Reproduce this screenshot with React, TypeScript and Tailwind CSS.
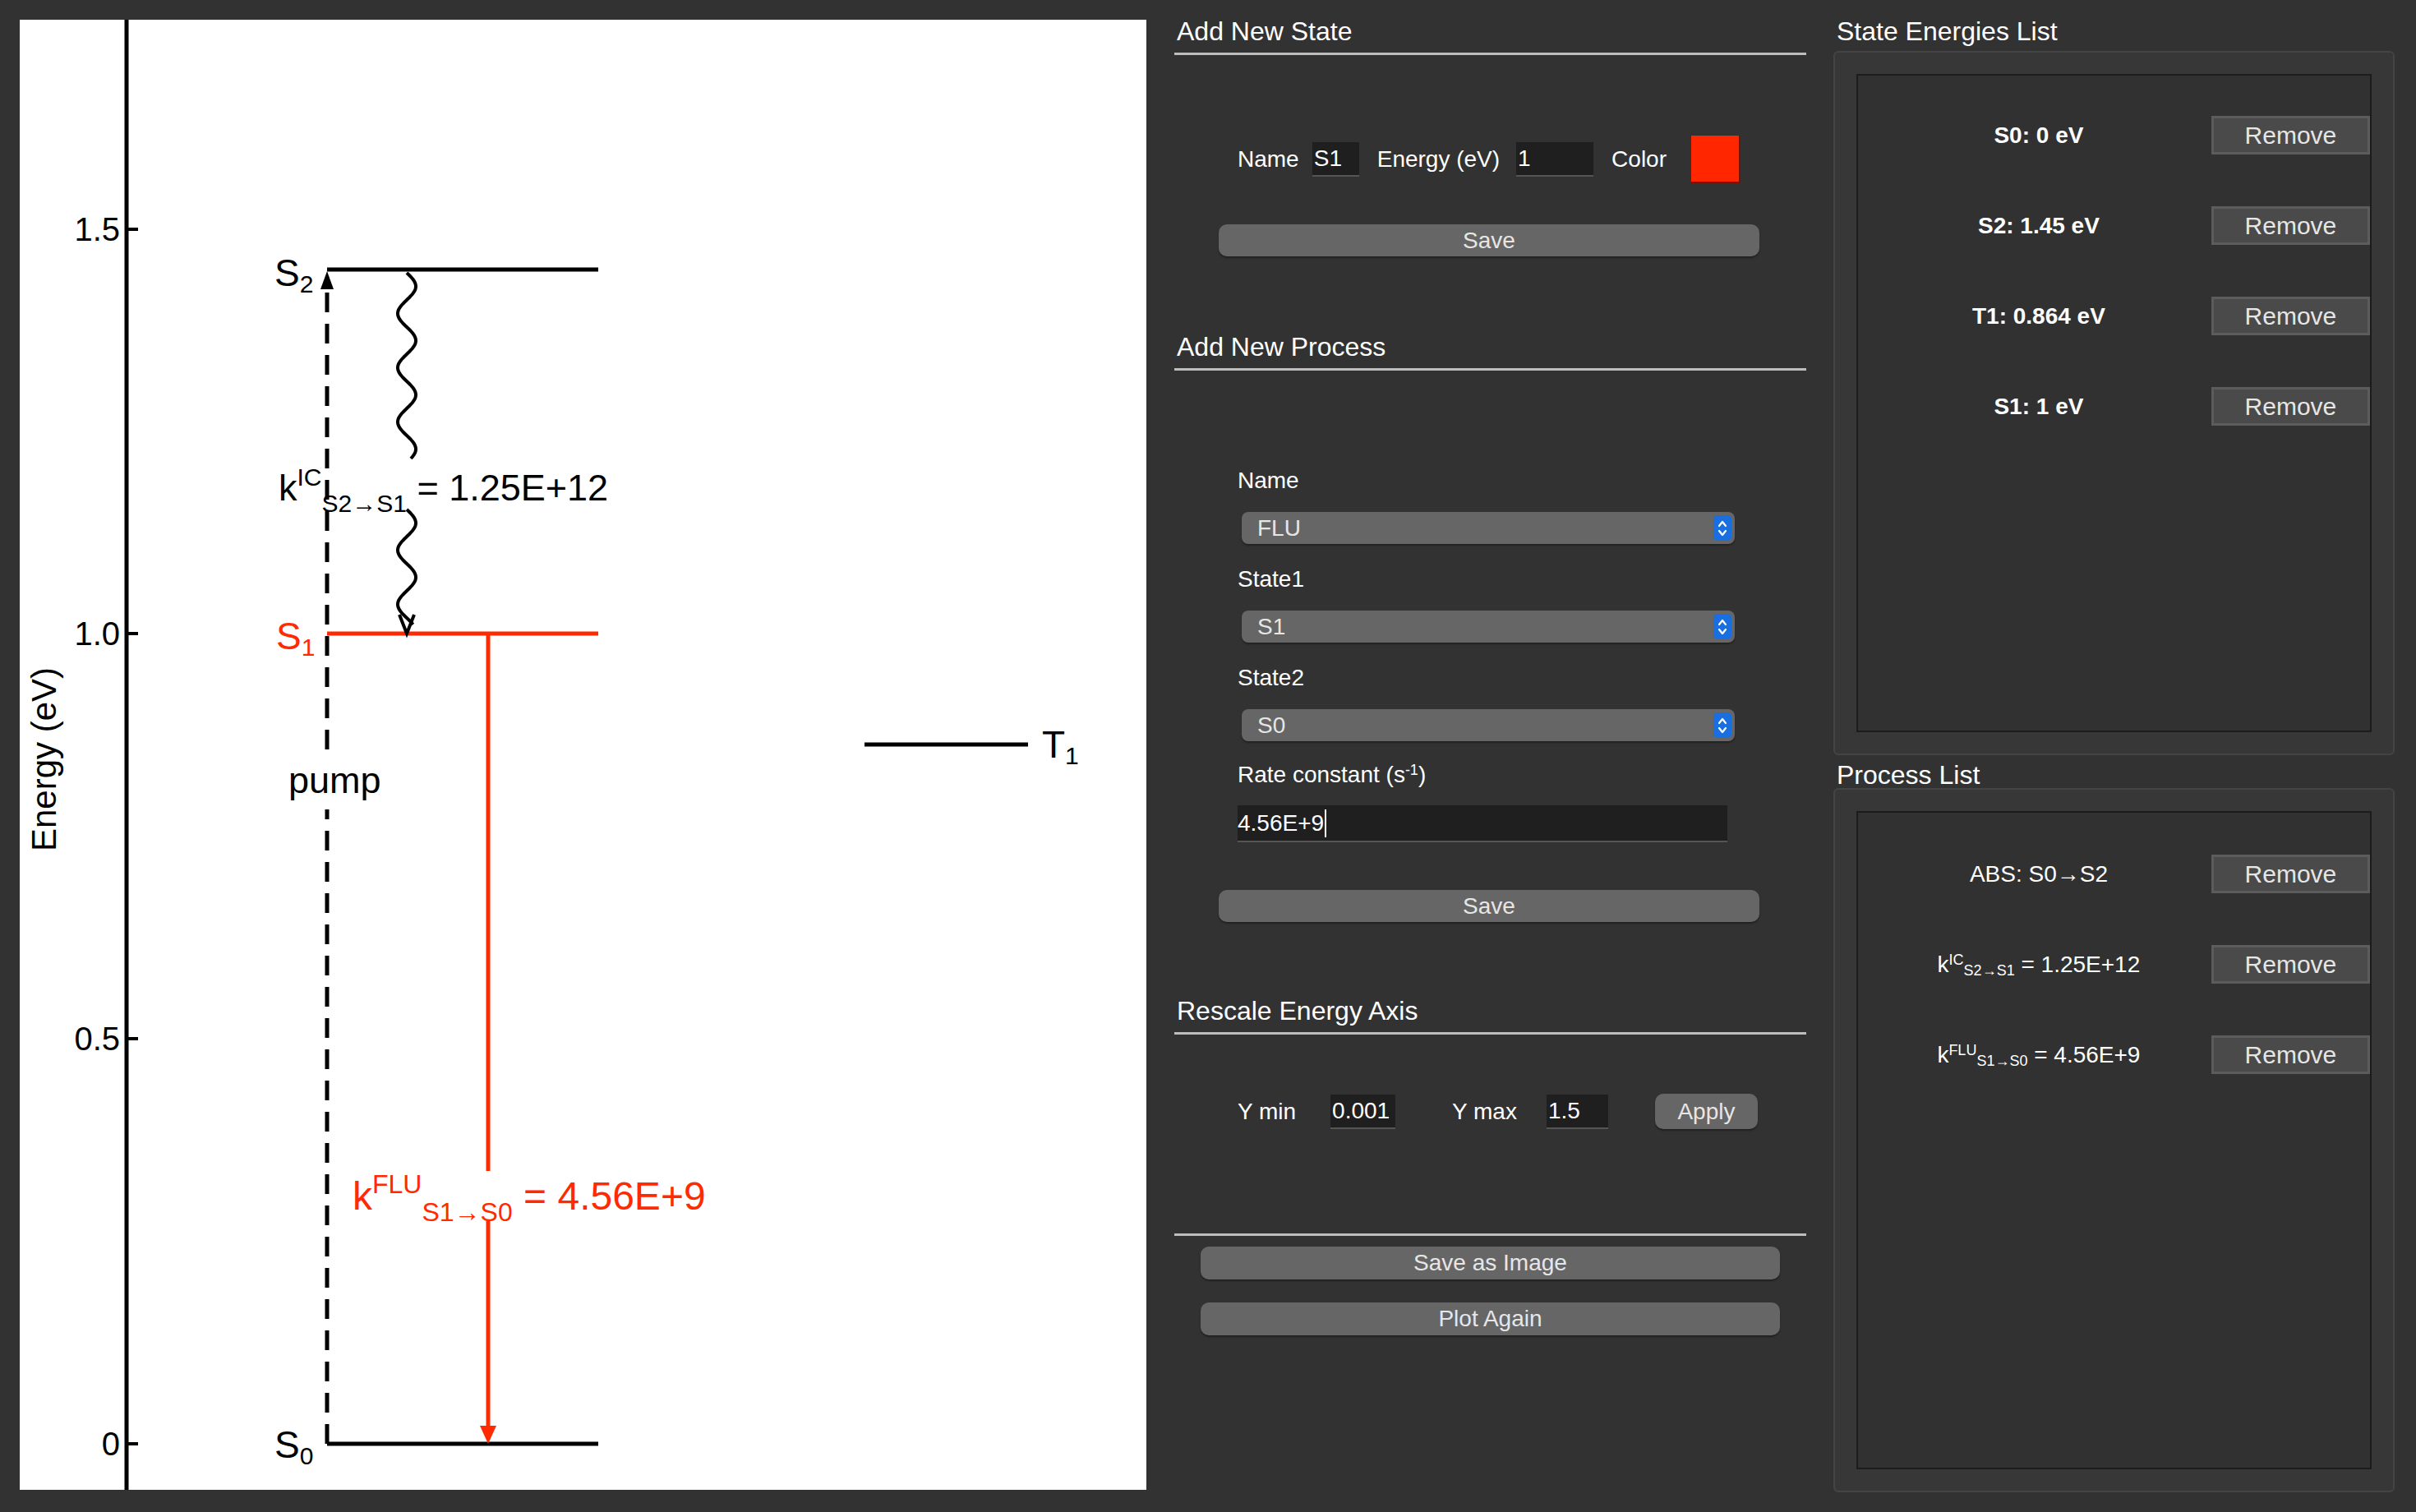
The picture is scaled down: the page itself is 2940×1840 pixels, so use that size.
import React from "react";

const RED = "#ff2a00";

function wave(x: number, y0: number, y1: number) {
  // vertical sine squiggle
  const pts: string[] = [];
  for (let y = y0; y <= y1; y += 2) {
    const dx = 11 * Math.sin(((y - y0) / 66) * 2 * Math.PI);
    pts.push(`${(x + dx).toFixed(1)},${y}`);
  }
  return "M" + pts.join(" L");
}

function Plot() {
  const tick = (y: number, label: string) => (
    <g key={label}>
      <line x1={154} x2={168} y1={y} y2={y} stroke="black" strokeWidth={4} />
      <text x={146} y={y + 14} textAnchor="end" fontSize={40}>{label}</text>
    </g>
  );
  return (
    <svg width={1371} height={1789} viewBox="24 24 1371 1789" className="bg-white block" fontFamily="'Liberation Sans', Arial, sans-serif">
      <line x1={154} x2={154} y1={24} y2={1813} stroke="black" strokeWidth={5} />
      {tick(279, "1.5")}
      {tick(771, "1.0")}
      {tick(1264, "0.5")}
      {tick(1757, "0")}
      <text transform="translate(68 924) rotate(-90)" textAnchor="middle" fontSize={42}>Energy (eV)</text>

      {/* levels */}
      <line x1={398} x2={728} y1={328} y2={328} stroke="black" strokeWidth={5} />
      <line x1={398} x2={728} y1={771} y2={771} stroke={RED} strokeWidth={5} />
      <line x1={398} x2={728} y1={1757} y2={1757} stroke="black" strokeWidth={5} />
      <line x1={1052} x2={1251} y1={906} y2={906} stroke="black" strokeWidth={5} />
      <text x={334} y={348} fontSize={46}>S<tspan fontSize={30} dy={8}>2</tspan></text>
      <text x={336} y={790} fontSize={46} fill={RED}>S<tspan fontSize={30} dy={8}>1</tspan></text>
      <text x={334} y={1774} fontSize={46}>S<tspan fontSize={30} dy={8}>0</tspan></text>
      <text x={1268} y={922} fontSize={46}>T<tspan fontSize={30} dy={8}>1</tspan></text>

      {/* pump dashed */}
      <line x1={398} x2={398} y1={1757} y2={985} stroke="black" strokeWidth={5} strokeDasharray="24 14" />
      <line x1={398} x2={398} y1={912} y2={340} stroke="black" strokeWidth={5} strokeDasharray="24 14" />
      <polygon points="398,330 390,352 406,352" fill="black" />
      <text x={351} y={965} fontSize={45}>pump</text>

      {/* IC wavy */}
      <path d={wave(495, 332, 559)} fill="none" stroke="black" strokeWidth={4} />
      <path d={wave(495, 620, 760)} fill="none" stroke="black" strokeWidth={4} />
      <polyline points="486,748 495,771 504,748" fill="none" stroke="black" strokeWidth={4} />
      <text x={339} y={609} fontSize={45}>
        k<tspan fontSize={30} dy={-18}>IC</tspan><tspan fontSize={30} dy={32}>S2→S1</tspan><tspan dy={-14}> = 1.25E+12</tspan>
      </text>

      {/* FLU arrow */}
      <line x1={594} x2={594} y1={771} y2={1425} stroke={RED} strokeWidth={5} />
      <line x1={594} x2={594} y1={1484} y2={1735} stroke={RED} strokeWidth={5} />
      <polygon points="594,1757 584,1735 604,1735" fill={RED} />
      <text x={429} y={1472} fontSize={48} fill={RED}>
        k<tspan fontSize={32} dy={-20}>FLU</tspan><tspan fontSize={32} dy={34}>S1→S0</tspan><tspan dy={-14}> = 4.56E+9</tspan>
      </text>
    </svg>
  );
}

function SectionTitle({ children }: { children: React.ReactNode }) {
  return (
    <div className="border-b-[3px] border-[#bdbdbd] pl-[3px] pb-[6px] text-[32px] leading-[40px] text-white">{children}</div>
  );
}

function GrayButton({ label, className }: { label: string; className: string }) {
  return (
    <div className={`flex items-center justify-center rounded-[10px] bg-[#666666] text-[28px] text-[#e6e6e6] shadow-[0_2px_2px_rgba(0,0,0,0.35)] ${className}`}>
      {label}
    </div>
  );
}

function Select({ value }: { value: string }) {
  return (
    <div className="ml-[5px] flex h-[39px] w-[600px] items-center justify-between rounded-[8px] bg-[#666666] pl-[19px] pr-[4px] text-[28px] text-[#e6e6e6] shadow-[0_2px_2px_rgba(0,0,0,0.35)]">
      <span>{value}</span>
      <div className="flex h-[31px] w-[22px] items-center justify-center rounded-[5px] bg-[#1a6fe0]">
        <svg width="12" height="22" viewBox="0 0 12 22" fill="none" stroke="white" strokeWidth="2.2" strokeLinecap="round" strokeLinejoin="round">
          <polyline points="2,8 6,3 10,8" />
          <polyline points="2,14 6,19 10,14" />
        </svg>
      </div>
    </div>
  );
}

function Field({ value, w }: { value: string; w: string }) {
  return (
    <div className={`flex h-[42px] items-center border-b-2 border-[#555] bg-[#1f1f1f] pl-[2px] text-[28px] text-white ${w}`}>{value}</div>
  );
}

function RemoveButton() {
  return (
    <div className="flex h-[47px] w-[195px] items-center justify-center border-[3px] border-[#5c5c5c] bg-[#4a4a4a] text-[30px] text-[#e6e6e6]">
      Remove
    </div>
  );
}

function ListRow({ children, bold }: { children: React.ReactNode; bold?: boolean }) {
  return (
    <div className="flex h-[47px] items-center">
      <div className={`w-[424px] text-center text-[28px] text-white ${bold ? "font-bold" : ""}`}>{children}</div>
      <RemoveButton />
    </div>
  );
}

export default function App() {
  return (
    <div className="flex h-[1840px] w-[2940px] bg-[#323232]" style={{ fontFamily: "'Liberation Sans', Arial, sans-serif" }}>
      <div className="pl-[24px] pt-[24px]">
        <Plot />
      </div>

      {/* middle controls */}
      <div className="ml-[34px] flex w-[769px] flex-col pt-[18px]">
        <SectionTitle>Add New State</SectionTitle>
        <div className="mt-[98px] flex items-center pl-[77px] text-[28px] text-white">
          <span>Name</span>
          <Field value="S1" w="ml-[16px] w-[57px]" />
          <span className="ml-[22px]">Energy (eV)</span>
          <Field value="1" w="ml-[20px] w-[94px]" />
          <span className="ml-[22px]">Color</span>
          <div className="ml-[30px] h-[58px] w-[60px] border-b-2 border-r-2 border-[#7a1000] bg-[#ff2600]" />
        </div>
        <GrayButton label="Save" className="ml-[54px] mt-[50px] h-[39px] w-[658px]" />

        <div className="mt-[90px]"><SectionTitle>Add New Process</SectionTitle></div>
        <div className="mt-[117px] pl-[77px] text-[28px] leading-[34px] text-white">Name</div>
        <div className="mt-[21px] pl-[77px]"><Select value="FLU" /></div>
        <div className="mt-[26px] pl-[77px] text-[28px] leading-[34px] text-white">State1</div>
        <div className="mt-[21px] pl-[77px]"><Select value="S1" /></div>
        <div className="mt-[26px] pl-[77px] text-[28px] leading-[34px] text-white">State2</div>
        <div className="mt-[21px] pl-[77px]"><Select value="S0" /></div>
        <div className="mt-[24px] pl-[77px] text-[28px] leading-[34px] text-white">
          Rate constant (s<sup className="text-[18px]">-1</sup>)
        </div>
        <div className="mt-[20px] pl-[77px]">
          <div className="flex h-[45px] w-[596px] items-center border-b-2 border-[#555] bg-[#1f1f1f] text-[28px] text-white">
            4.56E+9<span className="ml-[1px] h-[34px] w-[2px] bg-white" />
          </div>
        </div>
        <GrayButton label="Save" className="ml-[54px] mt-[58px] h-[39px] w-[658px]" />

        <div className="mt-[88px]"><SectionTitle>Rescale Energy Axis</SectionTitle></div>
        <div className="mt-[72px] flex items-center pl-[77px] text-[28px] text-white">
          <span>Y min</span>
          <Field value="0.001" w="ml-[42px] w-[79px]" />
          <span className="ml-[69px]">Y max</span>
          <Field value="1.5" w="ml-[36px] w-[75px]" />
          <GrayButton label="Apply" className="ml-[57px] h-[43px] w-[125px]" />
        </div>
        <div className="mt-[127px] border-b-[3px] border-[#bdbdbd]" />
        <GrayButton label="Save as Image" className="ml-[32px] mt-[13px] h-[40px] w-[705px]" />
        <GrayButton label="Plot Again" className="ml-[32px] mt-[28px] h-[40px] w-[705px]" />
      </div>

      {/* right lists */}
      <div className="ml-[33px] flex w-[683px] flex-col pt-[18px]">
        <div className="pl-[4px] text-[32px] leading-[40px] text-white">State Energies List</div>
        <div className="mt-[4px] h-[857px] rounded-[6px] border-2 border-[#444] bg-[#373737] p-[26px]">
          <div className="flex h-full flex-col gap-[63px] border-2 border-[#1c1c1c] bg-[#313131] pt-[49px] pl-[10px]">
            <ListRow bold>S0: 0 eV</ListRow>
            <ListRow bold>S2: 1.45 eV</ListRow>
            <ListRow bold>T1: 0.864 eV</ListRow>
            <ListRow bold>S1: 1 eV</ListRow>
          </div>
        </div>
        <div className="mt-[4px] pl-[4px] text-[32px] leading-[40px] text-white">Process List</div>
        <div className="mt-[-4px] h-[857px] rounded-[6px] border-2 border-[#444] bg-[#373737] p-[26px]">
          <div className="flex h-full flex-col gap-[63px] border-2 border-[#1c1c1c] bg-[#313131] pt-[51px] pl-[10px]">
            <ListRow>ABS: S0→S2</ListRow>
            <ListRow>
              k<sup className="text-[18px]">IC</sup><sub className="text-[18px]">S2→S1</sub> = 1.25E+12
            </ListRow>
            <ListRow>
              k<sup className="text-[18px]">FLU</sup><sub className="text-[18px]">S1→S0</sub> = 4.56E+9
            </ListRow>
          </div>
        </div>
      </div>
    </div>
  );
}
